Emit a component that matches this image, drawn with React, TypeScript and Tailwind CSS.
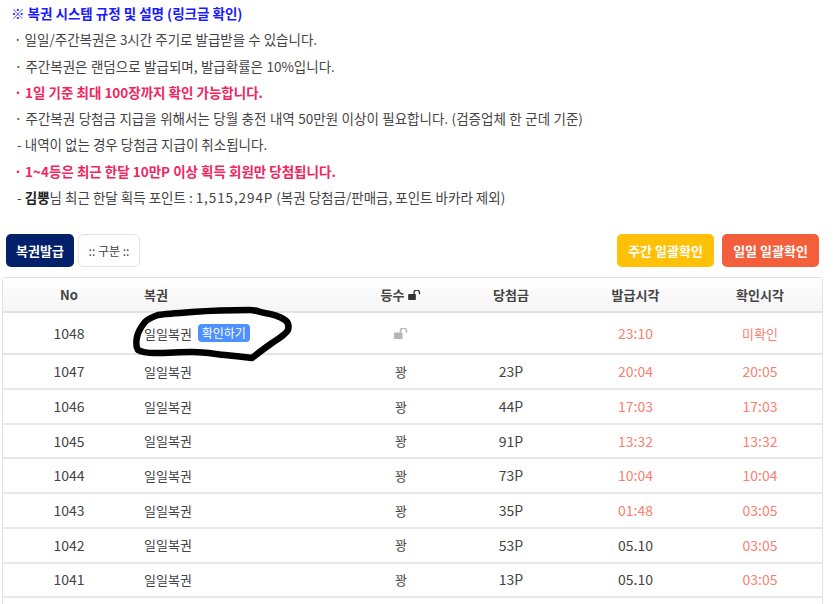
const rows = [
  { no: 1047, prize: "23P", issued: "20:04", checked: "20:05" },
  { no: 1046, prize: "44P", issued: "17:03", checked: "17:03" },
  { no: 1045, prize: "91P", issued: "13:32", checked: "13:32" },
  { no: 1044, prize: "73P", issued: "10:04", checked: "10:04" },
  { no: 1043, prize: "35P", issued: "01:48", checked: "03:05" },
  { no: 1042, prize: "53P", issued: "05.10", checked: "03:05", plain: true },
  { no: 1041, prize: "13P", issued: "05.10", checked: "03:05", plain: true },
];

const cols = "grid grid-cols-[132px_218px_96px_124px_125px_1fr] items-center";

function Lock({ className }: { className: string }) {
  return (
    <svg viewBox="0 0 14 11" className={className} fill="currentColor">
      <rect x="0" y="4.5" width="8.5" height="6.5" rx="0.8" />
      <path d="M6.5 4.5V3a3 3 0 0 1 6 0v1.6" fill="none" stroke="currentColor" strokeWidth="1.5" />
    </svg>
  );
}

function Note({ children, className = "" }: { children: React.ReactNode; className?: string }) {
  return <p className={`h-[26.3px] whitespace-nowrap leading-[26px] ${className}`}>{children}</p>;
}

export default function App() {
  return (
    <div className="relative h-[604px] w-[835px] overflow-hidden bg-white text-[13px] text-[#444] font-['Noto_Sans_CJK_KR','Noto_Sans',sans-serif]">
      <div className="pl-[11px] text-[13.5px]">
        <Note className="font-bold text-[#1a1aff]">※ 복권 시스템 규정 및 설명 (링크글 확인)</Note>
        <Note>&nbsp;· 일일/주간복권은 3시간 주기로 발급받을 수 있습니다.</Note>
        <Note className="[word-spacing:0.4px]">&nbsp;· 주간복권은 랜덤으로 발급되며, 발급확률은 10%입니다.</Note>
        <Note className="font-bold text-[#f0265f]">&nbsp;· 1일 기준 최대 100장까지 확인 가능합니다.</Note>
        <Note className="[word-spacing:0.45px]">&nbsp;· 주간복권 당첨금 지급을 위해서는 당월 충전 내역 50만원 이상이 필요합니다. (검증업체 한 군데 기준)</Note>
        <Note>&nbsp;&nbsp;- 내역이 없는 경우 당첨금 지급이 취소됩니다.</Note>
        <Note className="font-bold text-[#f0265f]">&nbsp;· 1~4등은 최근 한달 10만P 이상 획득 회원만 당첨됩니다.</Note>
        <Note>&nbsp;&nbsp;- <b className="text-[#222]">김뿡</b>님 최근 한달 획득 포인트 : <span className="tracking-[0.9px]">1,515,294P</span> (복권 당첨금/판매금, 포인트 바카라 제외)</Note>
      </div>

      <div className="mt-[24px] flex h-[33px] items-stretch pl-[6px] pr-[16px]">
        <button className="w-[68px] rounded-[5px] bg-[#03206b] text-[13px] font-bold text-white">복권발급</button>
        <button className="ml-1 w-[62px] rounded-[5px] border border-[#e3e3e3] bg-white text-[12px] text-[#444]">:: 구분 ::</button>
        <button className="ml-auto w-[97px] rounded-[5px] bg-[#ffc107] text-[13px] font-bold text-white">주간 일괄확인</button>
        <button className="ml-2 w-[97px] rounded-[5px] bg-[#f25f3a] text-[13px] font-bold text-white">일일 일괄확인</button>
      </div>

      <div className="ml-[2px] mt-[10px] w-[821px] rounded-t-[3px] border-x border-t border-[#e2e2e2]">
        <div className={`${cols} h-[35px] border-b-2 border-[#e2e2e2] bg-gradient-to-b from-white to-[#f5f5f5] font-bold text-[#444]`}>
          <div className="text-center">No</div>
          <div className="pl-[9px]">복권</div>
          <div className="flex items-center justify-center gap-1">
            등수
            <Lock className="h-[10px] w-[13px] text-[#333]" />
          </div>
          <div className="text-center">당첨금</div>
          <div className="text-center">발급시각</div>
          <div className="text-center">확인시각</div>
        </div>
        <div className={`${cols} h-[42px] border-b-2 border-[#e4e4e4] text-[14px]`}>
          <div className="text-center">1048</div>
          <div className="flex items-center pl-[9px] text-[13px]">
            일일복권
            <span className="ml-[6px] flex h-[18px] w-[52px] items-center justify-center rounded-[4px] bg-[#4d90fe] text-[12px] text-white">확인하기</span>
          </div>
          <div className="flex justify-center">
            <Lock className="h-[11px] w-[14px] text-[#b5b5b5]" />
          </div>
          <div />
          <div className="text-center text-[#fa8070]">23:10</div>
          <div className="text-center text-[13px] text-[#fa8070]">미확인</div>
        </div>
        {rows.map((r) => (
          <div key={r.no} className={`${cols} h-[34.7px] border-b-2 border-[#e8e8e8] text-[14px]`}>
            <div className="text-center">{r.no}</div>
            <div className="pl-[9px] text-[13px]">일일복권</div>
            <div className="text-center text-[13px]">꽝</div>
            <div className="text-center">{r.prize}</div>
            <div className={`text-center ${r.plain ? "" : "text-[#fa8070]"}`}>{r.issued}</div>
            <div className="text-center text-[#fa8070]">{r.checked}</div>
          </div>
        ))}
        <div className="h-[34px]" />
      </div>

      {/* marker scribble over the first row */}
      <svg className="pointer-events-none absolute left-0 top-0" width="835" height="604" fill="none">
        <path
          d="M250 310C230 310 205 311 192 312C178 313 165 314 158 315C152 317 148 319 145 322C141 327 138 332 137 337C136 342 136 347 138 350C143 353 149 353 155 353C168 353 180 352 192 352C204 352 215 354 225 355C235 356 244 357 252 358C258 353 265 348 272 343C280 338 286 334 288 330C289 326 288 322 285 320C279 316 272 314 265 313C260 312 255 310 250 310Z"
          stroke="#000"
          strokeWidth="6.5"
          strokeLinejoin="round"
        />
      </svg>
    </div>
  );
}
